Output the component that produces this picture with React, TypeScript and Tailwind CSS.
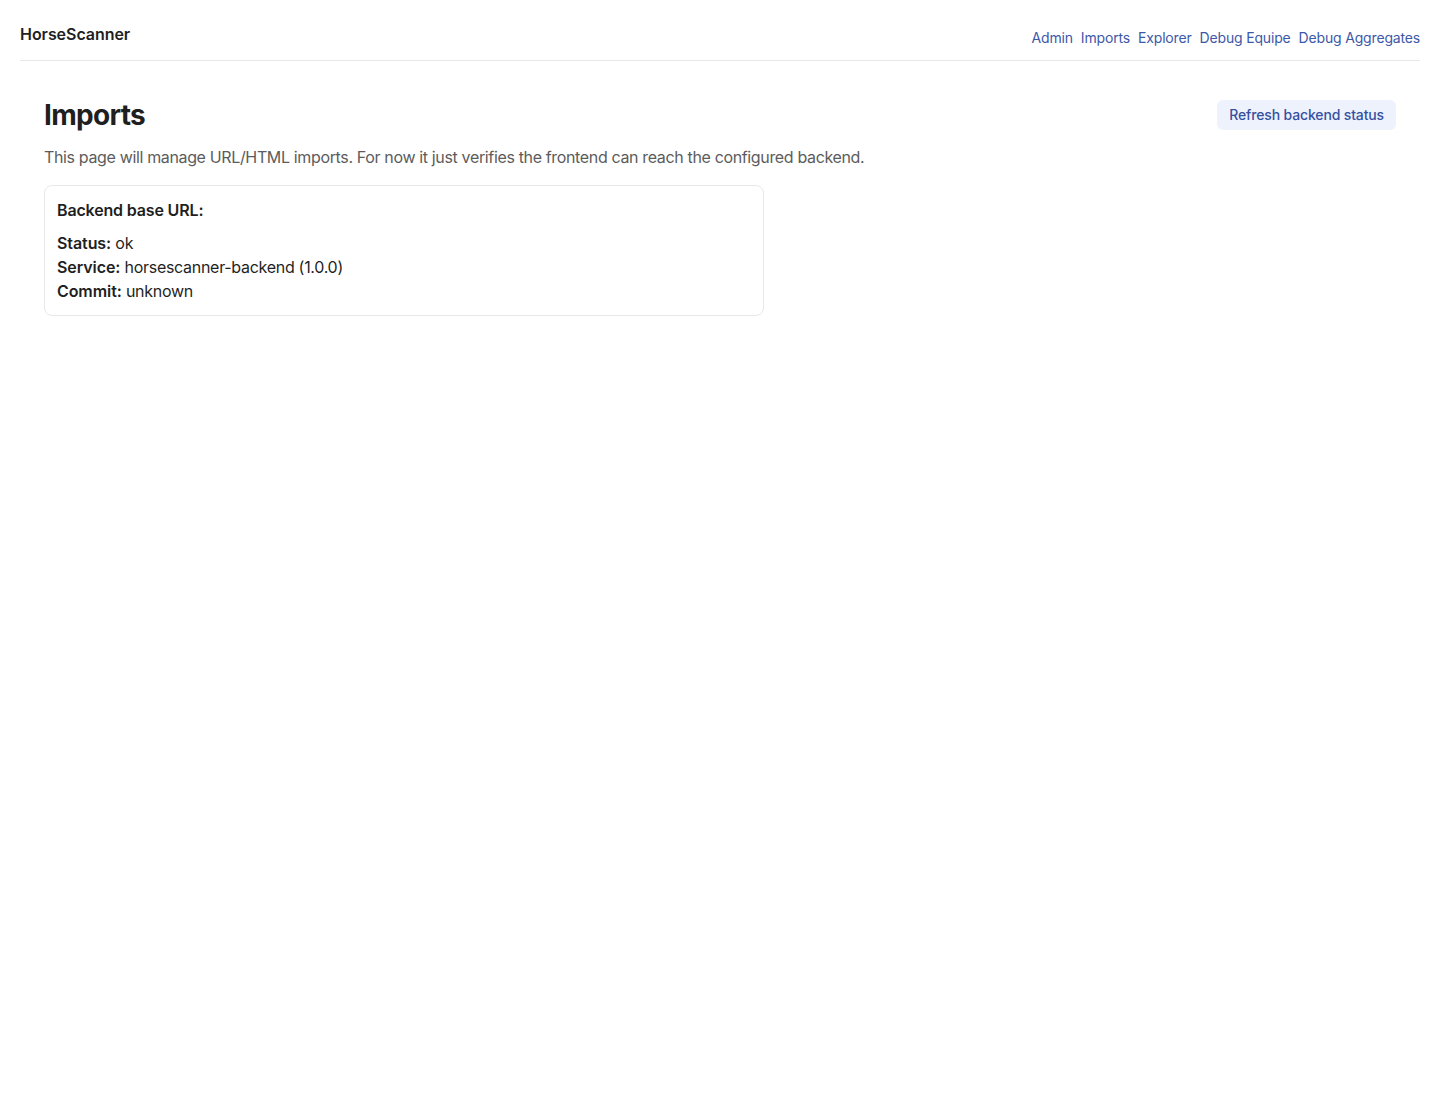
export default function App() {
  return (
    <div className="min-h-screen bg-white text-[#1f1f1f]" style={{ fontFamily: 'Inter, "Noto Sans", sans-serif' }}>
      <header className="mx-5 flex h-[61px] items-start justify-between border-b border-[#e8e8e8] pt-[22px]">
        <div className="text-[16px] font-semibold leading-6 tracking-[-0.003em] text-[#1f1f1f]">HorseScanner</div>
        <nav className="flex gap-2 pt-[6px] text-[14px] leading-5 tracking-[-0.012em] text-[#3d58a8]">
          <a href="#">Admin</a>
          <a href="#">Imports</a>
          <a href="#">Explorer</a>
          <a href="#">Debug Equipe</a>
          <a href="#">Debug Aggregates</a>
        </nav>
      </header>
      <main className="px-11 pt-[37px]">
        <div className="flex h-[34px] items-center justify-between">
          <h1 className="text-[28px] font-bold leading-[34px] tracking-[-0.025em] text-[#1f1f1f]">Imports</h1>
          <button className="h-[30px] rounded-md bg-[#eef2fd] px-3 text-[14px] font-medium leading-[30px] tracking-[-0.01em] text-[#3550a0]">
            Refresh backend status
          </button>
        </div>
        <p className="mt-[13px] text-[16px] leading-6 tracking-[-0.022em] text-[#5c5c5c]">
          This page will manage URL/HTML imports. For now it just verifies the frontend can reach the configured backend.
        </p>
        <div className="mt-4 w-[720px] rounded-lg border border-[#e8e8e8] p-3 text-[16px] leading-6 tracking-[-0.018em]">
          <div className="font-semibold tracking-[-0.01em]">Backend base URL:</div>
          <div className="mt-[9px]">
            <div>
              <span className="font-semibold tracking-[-0.005em]">Status:</span> ok
            </div>
            <div>
              <span className="font-semibold tracking-[-0.005em]">Service:</span> horsescanner-backend (1.0.0)
            </div>
            <div>
              <span className="font-semibold tracking-[-0.005em]">Commit:</span> unknown
            </div>
          </div>
        </div>
      </main>
    </div>
  );
}
